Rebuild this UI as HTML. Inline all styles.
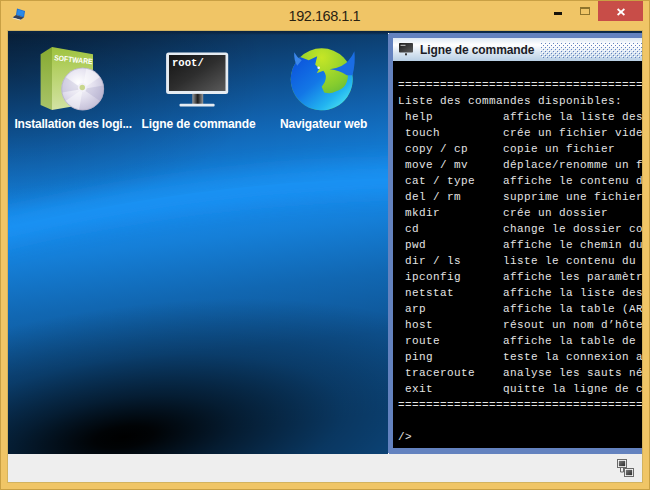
<!DOCTYPE html>
<html><head><meta charset="utf-8"><title>192.168.1.1</title>
<style>
html,body{margin:0;padding:0;}
body{width:650px;height:490px;overflow:hidden;position:relative;background:#f0c566;font-family:"Liberation Sans",sans-serif;}
#frame{position:absolute;left:0;top:0;width:648px;height:488px;border:1px solid #c9a044;}
#inner{position:absolute;left:7px;top:30px;width:634px;height:451px;border:1px solid #d3b35f;}
#title{position:absolute;left:288.6px;top:4.5px;white-space:nowrap;font-size:14.5px;letter-spacing:-0.46px;color:#2a2212;line-height:22px;}
#close{position:absolute;left:598px;top:1px;width:45px;height:20px;background:#c84d48;}
#min{position:absolute;left:554px;top:12px;width:8px;height:2.5px;background:#17130a;}
#max{position:absolute;left:580px;top:7px;width:8px;height:5px;border:1px solid #8f742c;border-top-width:2px;}
#desk{position:absolute;left:8px;top:31px;width:634px;height:423px;overflow:hidden;background:#0f5fa8;}
#status{position:absolute;left:8px;top:454px;width:634px;height:28px;background:#eeeeee;}
.ico{position:absolute;top:86px;color:#fff;font-weight:bold;font-size:12px;line-height:14px;white-space:nowrap;}
#iframe{position:absolute;left:380px;top:2px;width:300px;height:421px;background:#6382bf;}
#ititle{position:absolute;left:5px;top:5px;right:0;height:23px;background:linear-gradient(to bottom,#dde8f3 0%,#ffffff 30%,#dde8f3 60%,#b8cfe5 100%);}
#ititle span{position:absolute;left:27px;top:5px;letter-spacing:-0.1px;font-weight:bold;font-size:12px;color:#1c1c26;line-height:14px;white-space:nowrap;}
#bumps{position:absolute;left:147px;top:4px;width:160px;height:16px;}
#tico{position:absolute;left:5px;top:4px;}
#term{position:absolute;left:5px;top:28px;right:0;bottom:6px;background:#000;color:#e4e4e4;font-family:"Liberation Mono",monospace;font-size:11px;line-height:16px;letter-spacing:0.4px;white-space:pre;margin:0;padding:0 0 0 5px;overflow:hidden;}
</style></head><body>
<div id="frame"></div>
<div id="inner"></div>
<div id="title">192.168.1.1</div>
<div id="close"></div>
<div id="min"></div><div id="max"></div>
<svg id="cx" width="10" height="10" viewBox="0 0 10 10" style="position:absolute;left:616px;top:6.500px"><path d="M1.600 2L8.400 8M8.400 2L1.600 8" stroke="#fff" stroke-width="1.700" fill="none"/></svg>
<svg id="wico" width="16" height="16" viewBox="0 0 16 16" style="position:absolute;left:11px;top:6px">
<path d="M6 2.500L14 5L13 11.500L5 9Z" fill="#1d6fd0"/><path d="M6.800 3.600L13 5.600L12.300 10.300L6 8.400Z" fill="#2a8ae8"/>
<path d="M5 9L13 11.500L9.500 13.800L1.500 11.400Z" fill="#33415e"/><path d="M1.500 11.400L9.500 13.800L9.500 14.600L1.500 12.200Z" fill="#e8eaf0"/>
</svg>
<div id="desk">
<svg id="wall" width="634" height="423" viewBox="0 0 634 423" style="position:absolute;left:0;top:0">
<defs>
<linearGradient id="gA" gradientUnits="userSpaceOnUse" x1="0" y1="0" x2="23.3" y2="194">
<stop offset="0" stop-color="#09213c"/><stop offset="0.06" stop-color="#0a2a4c"/><stop offset="0.2" stop-color="#0c3a68"/><stop offset="0.4" stop-color="#0e4e8c"/><stop offset="0.6" stop-color="#1162ae"/><stop offset="0.8" stop-color="#1376cc"/><stop offset="0.95" stop-color="#1686e4"/><stop offset="1" stop-color="#1789ea"/>
</linearGradient>
<linearGradient id="gT" x1="0" y1="0" x2="0" y2="1"><stop offset="0" stop-color="#0a2441" stop-opacity="1"/><stop offset="0.4" stop-color="#0a2441" stop-opacity="0.8"/><stop offset="1" stop-color="#0a2441" stop-opacity="0"/></linearGradient>
<radialGradient id="gD" gradientUnits="userSpaceOnUse" cx="0" cy="0" r="1" gradientTransform="translate(0 40) scale(260 140)">
<stop offset="0" stop-color="#000" stop-opacity="0.22"/><stop offset="0.5" stop-color="#000" stop-opacity="0.12"/><stop offset="1" stop-color="#000" stop-opacity="0"/>
</radialGradient>
<filter id="blur" x="-10%" y="-100%" width="120%" height="300%"><feGaussianBlur stdDeviation="12"/></filter>
<linearGradient id="gB" gradientUnits="userSpaceOnUse" x1="0" y1="197" x2="27.1" y2="423">
<stop offset="0" stop-color="#1789ea"/><stop offset="0.15" stop-color="#157fd8"/><stop offset="0.39" stop-color="#1167b2"/><stop offset="0.65" stop-color="#0e5494"/><stop offset="1" stop-color="#0d4c86"/>
</linearGradient>
<radialGradient id="gC" gradientUnits="userSpaceOnUse" cx="0" cy="0" r="1" gradientTransform="translate(116 406) rotate(-8) scale(370 130)">
<stop offset="0" stop-color="#000" stop-opacity="1"/><stop offset="0.08" stop-color="#000" stop-opacity="0.96"/><stop offset="0.3" stop-color="#000" stop-opacity="0.64"/><stop offset="0.6" stop-color="#000" stop-opacity="0.28"/><stop offset="1" stop-color="#000" stop-opacity="0"/>
</radialGradient>
</defs>
<rect width="634" height="423" fill="url(#gB)"/>
<rect width="634" height="423" fill="url(#gC)"/>
<path d="M0 0H634V196.3H822Q411 98.3 0 196.3Z" fill="url(#gA)"/>
<rect width="634" height="423" fill="url(#gD)"/>
<rect width="634" height="4" fill="url(#gT)"/>
<path d="M-40 206.3Q411 88.3 862 206.3" fill="none" stroke="#1c9cff" stroke-width="22" filter="url(#blur)" opacity="0.62"/>
</svg>
<svg id="icons" width="634" height="423" viewBox="0 0 634 423" style="position:absolute;left:0;top:0">
<defs>
<linearGradient id="bxF" x1="0" y1="0" x2="0" y2="1"><stop offset="0" stop-color="#9ec23e"/><stop offset="0.35" stop-color="#b4d064"/><stop offset="1" stop-color="#d3e3a4"/></linearGradient>
<linearGradient id="bxL" x1="0" y1="0" x2="0" y2="1"><stop offset="0" stop-color="#86aa30"/><stop offset="1" stop-color="#a9c46a"/></linearGradient>
<radialGradient id="cd" cx="0.4" cy="0.35" r="0.75"><stop offset="0" stop-color="#ffffff"/><stop offset="0.5" stop-color="#e2dfee"/><stop offset="1" stop-color="#bdb8d2"/></radialGradient>
<linearGradient id="scr" x1="0" y1="0" x2="1" y2="1"><stop offset="0" stop-color="#141414"/><stop offset="0.5" stop-color="#2e2e2e"/><stop offset="1" stop-color="#5a5a5a"/></linearGradient>
<linearGradient id="neck" x1="0" y1="0" x2="1" y2="0"><stop offset="0" stop-color="#9a9a9a"/><stop offset="0.5" stop-color="#1c1c1c"/><stop offset="1" stop-color="#9a9a9a"/></linearGradient>
<radialGradient id="glG" cx="0.5" cy="0.15" r="0.8"><stop offset="0" stop-color="#c6e626"/><stop offset="0.6" stop-color="#86cc2e"/><stop offset="1" stop-color="#4fb040"/></radialGradient>
<linearGradient id="glB2" gradientUnits="userSpaceOnUse" x1="-25" y1="-20" x2="18" y2="30"><stop offset="0" stop-color="#0c55dc"/><stop offset="0.45" stop-color="#1377e6"/><stop offset="0.8" stop-color="#22b4f0"/><stop offset="1" stop-color="#45dcf2"/></linearGradient>
<linearGradient id="glB" x1="0" y1="0" x2="1" y2="1"><stop offset="0" stop-color="#0c55dc"/><stop offset="0.45" stop-color="#1377e6"/><stop offset="0.8" stop-color="#22b4f0"/><stop offset="1" stop-color="#45dcf2"/></linearGradient>
</defs>
<!-- software box -->
<polygon points="32.6,23.3 44,16 44,79 32.6,74" fill="url(#bxL)"/>
<polygon points="44,16 85,23.3 85,72 44,79" fill="url(#bxF)"/>
<text x="46" y="29.300" font-family="Liberation Sans, sans-serif" font-weight="bold" font-size="7.600" fill="#fff" transform="rotate(6 46 29.300)" textLength="38.500" lengthAdjust="spacingAndGlyphs">SOFTWARE</text>
<circle cx="74.7" cy="58" r="21.3" fill="url(#cd)"/>
<path d="M74.7 58L78.3 37.3A21 21 0 0 1 91.9 46.0ZM74.7 58L71.1 78.7A21 21 0 0 1 57.5 70.0Z" fill="#fff" opacity="0.45"/><path d="M74.7 58L54.0 61.6A21 21 0 0 1 57.5 46.0ZM74.7 58L95.4 54.4A21 21 0 0 1 91.9 70.0Z" fill="#8f88b4" opacity="0.22"/><circle cx="74.7" cy="58" r="21" fill="none" stroke="#aaa6c0" stroke-width="0.6"/>
<circle cx="74.3" cy="56.5" r="3.6" fill="#c9d78d" stroke="#f2f0f8" stroke-width="1.8"/>
<!-- monitor -->
<rect x="158.1" y="21.4" width="62.1" height="41.5" rx="2.5" fill="#e6ecf2"/>
<rect x="161" y="24" width="56.5" height="36" fill="url(#scr)"/>
<text x="164" y="35" font-family="Liberation Mono, monospace" font-weight="bold" font-size="10.6" fill="#fff">root/</text>
<rect x="184.3" y="62.9" width="10.9" height="10.5" fill="url(#neck)"/>
<rect x="171.5" y="72.8" width="35.1" height="2.8" rx="1" fill="#e6ecf2"/>
<!-- globe -->
<g transform="translate(313.7 48.3)">
<circle cx="0" cy="0" r="31" fill="url(#glG)"/>
<path d="M-21.500 -22.300L-13 -19L-4.500 -23L-6.500 -14.700L-2.500 -10.600L-5 -6L1.600 -8.500Q6 -4 3 3L0 7.400L2.500 13.100Q9 15 13.900 12.300Q21 10 23.700 5.700Q27 0 26 -7L30.500 -5.500A31 31 0 1 1 -21.500 -22.300Z" fill="url(#glB2)"/>
<path d="M8 -10Q22 -12 27 -19Q31 -24 32.700 -28Q34 -16 30.800 -4L25 -4Q18 -9 8 -10Z" fill="#1a6de4"/>
<path d="M-27.500 -27Q-28 -19 -24.500 -13.500L-20 -19Q-25 -22 -27.500 -27Z" fill="#3a86ea"/>
<circle cx="-3" cy="-11.500" r="1.300" fill="#eef4ff"/>
</g>
</svg>
<div class="ico" style="left:6.4px;letter-spacing:-0.19px">Installation des logi...</div>
<div class="ico" style="left:133.6px;letter-spacing:-0.12px">Ligne de commande</div>
<div class="ico" style="left:271.9px;letter-spacing:-0.1px">Navigateur web</div>
<div id="iframe"><div style="position:absolute;left:0;top:0;width:1px;height:1px;background:#fff"></div><div style="position:absolute;left:0;bottom:0;width:1px;height:1px;background:#fff"></div><div id="ititle"><svg id="tico" width="16" height="16" viewBox="0 0 16 16"><defs><linearGradient id="tg" x1="0" y1="0" x2="1" y2="1"><stop offset="0" stop-color="#1a1a1a"/><stop offset="1" stop-color="#5c5c5c"/></linearGradient></defs><rect x="1" y="1" width="14" height="9.500" rx="0.800" fill="url(#tg)"/><rect x="2.500" y="2.800" width="5" height="1" fill="#ccc"/><rect x="7" y="11.300" width="2" height="2" fill="#3a3a3a"/></svg><span>Ligne de commande</span><svg id="bumps" width="160" height="16"><defs><pattern id="bp" width="4" height="4" patternUnits="userSpaceOnUse"><rect x="0" y="0" width="1" height="1" fill="#fff"/><rect x="1" y="1" width="1" height="1" fill="#6382bf"/><rect x="2" y="2" width="1" height="1" fill="#fff"/><rect x="3" y="3" width="1" height="1" fill="#6382bf"/></pattern></defs><rect width="160" height="16" fill="url(#bp)"/></svg></div>
<pre id="term">

================================================
Liste des commandes disponibles:
 help          affiche la liste des commandes
 touch         crée un fichier vide
 copy / cp     copie un fichier
 move / mv     déplace/renomme un fichier
 cat / type    affiche le contenu d’un fichier
 del / rm      supprime une fichier
 mkdir         crée un dossier
 cd            change le dossier courant
 pwd           affiche le chemin du dossier courant
 dir / ls      liste le contenu du dossier
 ipconfig      affiche les paramètres réseau
 netstat       affiche la liste des ports ouverts
 arp           affiche la table (ARP)
 host          résout un nom d’hôte
 route         affiche la table de routage
 ping          teste la connexion avec un hôte
 traceroute    analyse les sauts nécessaires
 exit          quitte la ligne de commande
================================================

/&gt;</pre></div>
</div>
<div id="status"><svg width="20" height="20" viewBox="0 0 20 20" style="position:absolute;left:608px;top:4px">
<defs><linearGradient id="mn" x1="0" y1="0" x2="1" y2="1"><stop offset="0" stop-color="#7a7a7a"/><stop offset="1" stop-color="#2c2c2c"/></linearGradient></defs>
<path d="M4.500 10v4h3v-4" fill="none" stroke="#666" stroke-width="1"/>
<rect x="1.500" y="1.500" width="9" height="8" fill="#fff" stroke="#6a6a6a"/><rect x="2.800" y="2.800" width="6.400" height="5.400" fill="url(#mn)"/>
<rect x="8.500" y="10.500" width="9" height="8" fill="#fff" stroke="#6a6a6a"/><rect x="9.800" y="11.800" width="6.400" height="5.400" fill="url(#mn)"/>
</svg></div>
</body></html>
